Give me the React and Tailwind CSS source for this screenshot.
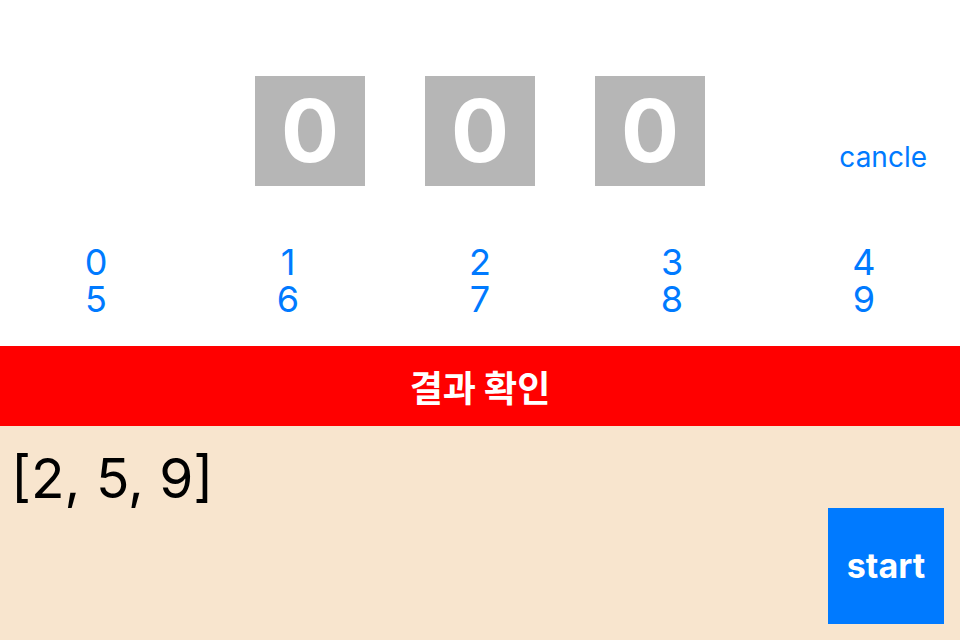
export default function App() {
  const boxes = ["0", "0", "0"];
  const nums = ["0", "1", "2", "3", "4", "5", "6", "7", "8", "9"];
  return (
    <div
      className="w-[960px] h-[640px] flex flex-col bg-white overflow-hidden"
      style={{ fontFamily: 'Inter, "Noto Sans CJK KR", sans-serif' }}
    >
      <div className="h-[346px] flex flex-col">
        <div className="grid grid-cols-[1fr_auto_1fr] pt-[76px]">
          <div />
          <div className="flex gap-[60px]">
            {boxes.map((b, i) => (
              <div
                key={i}
                className="w-[110px] h-[110px] bg-[#b6b6b6] flex items-center justify-center text-white font-bold text-[86px] leading-none"
              >
                {b}
              </div>
            ))}
          </div>
          <div className="flex items-end justify-end pr-[33px]">
            <span className="text-[#007aff] text-[28px] leading-[34px] mb-[12px]">cancle</span>
          </div>
        </div>
        <div className="grid grid-cols-5 mt-[58px]">
          {nums.map((n) => (
            <div key={n} className="text-center text-[#007aff] text-[36px] leading-[37px]">
              {n}
            </div>
          ))}
        </div>
      </div>
      <div className="h-[80px] bg-[#ff0000] flex items-center justify-center">
        <span
          className="text-white font-bold text-[36px] leading-none"
          style={{ fontFamily: '"Noto Sans CJK KR", sans-serif' }}
        >
          결과 확인
        </span>
      </div>
      <div className="flex-1 bg-[#f8e5ce] flex flex-col justify-between">
        <div className="pl-[11px] pt-[22px] text-black text-[55px] leading-[60px]">[2, 5, 9]</div>
        <div className="flex justify-end pr-[16px] pb-[16px]">
          <div className="w-[116px] h-[116px] bg-[#007aff] flex items-center justify-center text-white font-bold text-[34px] leading-none">
            start
          </div>
        </div>
      </div>
    </div>
  );
}
